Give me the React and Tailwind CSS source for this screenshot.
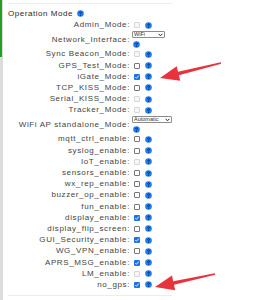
import React from 'react';

const rows = [
  { label: 'Admin_Mode:', type: 'check', state: 'disabled' },
  { label: 'Network_Interface:', type: 'select', value: 'WiFi', width: 'w-[33px]' },
  { label: 'Sync Beacon_Mode:', type: 'check', state: 'disabled' },
  { label: 'GPS_Test_Mode:', type: 'check', state: 'off' },
  { label: 'iGate_Mode:', type: 'check', state: 'on' },
  { label: 'TCP_KISS_Mode:', type: 'check', state: 'off' },
  { label: 'Serial_KISS_Mode:', type: 'check', state: 'disabled' },
  { label: 'Tracker_Mode:', type: 'check', state: 'disabled' },
  { label: 'WiFi AP standalone_Mode:', type: 'select', value: 'Automatic', width: 'w-[40px]' },
  { label: 'mqtt_ctrl_enable:', type: 'check', state: 'off' },
  { label: 'syslog_enable:', type: 'check', state: 'off' },
  { label: 'IoT_enable:', type: 'check', state: 'disabled' },
  { label: 'sensors_enable:', type: 'check', state: 'off' },
  { label: 'wx_rep_enable:', type: 'check', state: 'off' },
  { label: 'buzzer_op_enable:', type: 'check', state: 'off' },
  { label: 'fun_enable:', type: 'check', state: 'off' },
  { label: 'display_enable:', type: 'check', state: 'on' },
  { label: 'display_flip_screen:', type: 'check', state: 'off' },
  { label: 'GUI_Security_enable:', type: 'check', state: 'on' },
  { label: 'WG_VPN_enable:', type: 'check', state: 'off' },
  { label: 'APRS_MSG_enable:', type: 'check', state: 'on' },
  { label: 'LM_enable:', type: 'check', state: 'disabled' },
  { label: 'no_gps:', type: 'check', state: 'on' },
];

function HelpDot() {
  return (
    <svg width="7" height="7" viewBox="0 0 7 7" className="shrink-0">
      <circle cx="3.5" cy="3.5" r="3.3" fill="#1f7cf0" />
      <path d="M2.4 2.6 Q3.5 1.3 4.5 2.5 Q4.4 3.3 3.6 3.6 L3.6 4.4" stroke="#0d2a55" strokeWidth="0.9" fill="none" />
      <circle cx="3.6" cy="5.4" r="0.5" fill="#0d2a55" />
    </svg>
  );
}

function Check({ state }) {
  if (state === 'on') {
    return (
      <span className="w-[6px] h-[6px] rounded-[1px] bg-[#1a73e8] flex items-center justify-center shrink-0">
        <svg width="6" height="6" viewBox="0 0 6 6">
          <path d="M1.3 3.1 L2.5 4.3 L4.8 1.5" stroke="white" strokeWidth="0.9" fill="none" />
        </svg>
      </span>
    );
  }
  if (state === 'disabled') {
    return <span className="w-[6px] h-[6px] rounded-[1px] border border-[#d6d6d6] bg-[#f7f7f7] shrink-0" />;
  }
  return <span className="w-[6px] h-[6px] rounded-[1px] border border-[#777] bg-white shrink-0" />;
}

function Arrow({ tail, tip }) {
  // tapered shaft + triangular head, computed from two points
  const dx = tip[0] - tail[0];
  const dy = tip[1] - tail[1];
  const len = Math.hypot(dx, dy);
  const ux = dx / len, uy = dy / len;
  const nx = -uy, ny = ux;
  const headLen = 19, headW = 7.5, shaftEnd = 1.8, shaftTail = 0.8;
  const base = [tip[0] - ux * headLen, tip[1] - uy * headLen];
  const p = (pt, n, w) => `${(pt[0] + nx * w * n).toFixed(1)},${(pt[1] + ny * w * n).toFixed(1)}`;
  const pts = [
    p(tail, 1, shaftTail),
    p(base, 1, shaftEnd),
    p(base, 1, headW),
    `${tip[0]},${tip[1]}`,
    p(base, -1, headW),
    p(base, -1, shaftEnd),
    p(tail, -1, shaftTail),
  ].join(' ');
  return <polygon points={pts} fill="#e8333d" />;
}

export default function App() {
  return (
    <div className="relative w-[259px] h-[300px] overflow-hidden bg-white flex" style={{ fontFamily: '"Liberation Sans", Arial, sans-serif' }}>
      {/* left rail */}
      <div className="w-[3px] h-full bg-[#dcdcdc] flex flex-col shrink-0">
        <div className="w-[2px] h-[57px] bg-[#22a022]" />
      </div>

      <div className="pl-[5px] pt-[3px]">
        <div className="w-[164px] border-t border-b border-[#ececec] pt-[4.4px] pb-[4px]">
          <div className="h-[11.2px] flex items-center gap-[4px] text-[8px] tracking-[0.55px] text-[#2a2a2a]">
            <span>Operation Mode</span>
            <HelpDot />
          </div>

          {rows.map((row, i) => (
            <div key={i} className={`flex items-center ${row.type === 'select' ? 'h-[18px]' : 'h-[11.2px]'}`}>
              <div className="w-[122px] text-right text-[8px] leading-[10px] tracking-[0.62px] text-[#444] whitespace-nowrap">
                {row.label}
              </div>
              {row.type === 'select' ? (
                <div className="ml-[2px] flex flex-col gap-[3px]">
                  <div className={`${row.width} h-[7px] border border-[#8c8c8c] rounded-[1px] bg-white flex items-center justify-between px-[1px]`}>
                    <span className="text-[5.5px] leading-none text-[#333]">{row.value}</span>
                    <svg width="5" height="4" viewBox="0 0 5 4">
                      <path d="M0.6 0.8 L2.5 2.8 L4.4 0.8" stroke="#222" strokeWidth="1" fill="none" />
                    </svg>
                  </div>
                  <div className="pl-[1px]">
                    <HelpDot />
                  </div>
                </div>
              ) : (
                <div className="ml-[4px] flex items-center gap-[5px]">
                  <Check state={row.state} />
                  <HelpDot />
                </div>
              )}
            </div>
          ))}
        </div>
      </div>

      {/* annotation arrows */}
      <svg className="absolute inset-0 pointer-events-none" width="259" height="300">
        <Arrow tail={[221, 63]} tip={[160, 78]} />
        <Arrow tail={[215, 274]} tip={[155, 287]} />
      </svg>
    </div>
  );
}
